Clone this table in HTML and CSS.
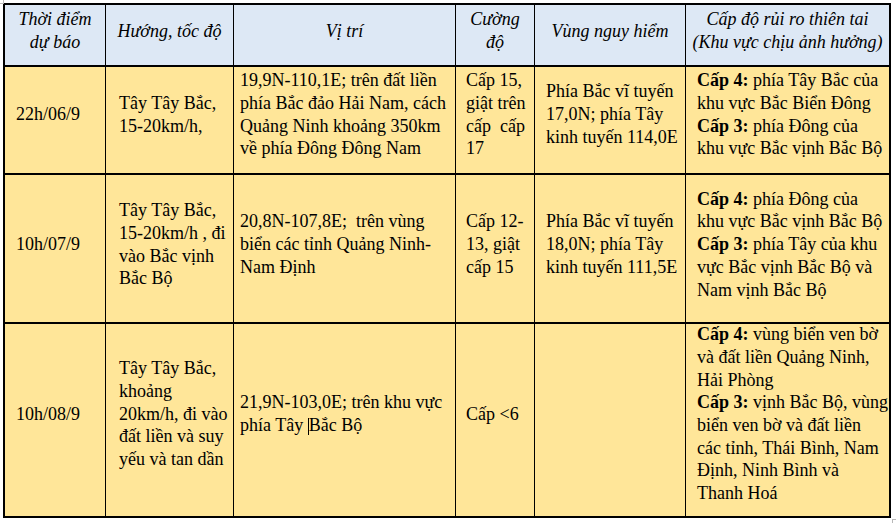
FILE: index.html
```html
<!DOCTYPE html>
<html lang="vi">
<head>
<meta charset="utf-8">
<title>Dự báo bão</title>
<link rel="stylesheet" href="styles.css">
</head>
<body>
<div class="sheet">
  <div class="cell head"><div class="txt">Thời điểm<br>dự báo</div></div>
  <div class="cell head"><div class="txt">Hướng, tốc độ</div></div>
  <div class="cell head"><div class="txt">Vị trí</div></div>
  <div class="cell head"><div class="txt">Cường<br>độ</div></div>
  <div class="cell head"><div class="txt">Vùng nguy hiểm</div></div>
  <div class="cell head"><div class="txt">Cấp độ rủi ro thiên tai<br>(Khu vực chịu ảnh hưởng)</div></div>

  <div class="cell c1 r1"><div class="txt">22h/06/9</div></div>
  <div class="cell c2 r1"><div class="txt">Tây Tây Bắc,<br>15-20km/h,</div></div>
  <div class="cell c3 r1"><div class="txt">19,9N-110,1E; trên đất liền<br>phía Bắc đảo Hải Nam, cách<br>Quảng Ninh khoảng 350km<br>về phía Đông Đông Nam</div></div>
  <div class="cell c4 r1"><div class="txt">Cấp 15,<br>giật trên<br>cấp&nbsp; cấp<br>17</div></div>
  <div class="cell c5 r1"><div class="txt">Phía Bắc vĩ tuyến<br>17,0N; phía Tây<br>kinh tuyến 114,0E</div></div>
  <div class="cell c6 r1"><div class="txt"><b>Cấp 4:</b> phía Tây Bắc của<br>khu vực Bắc Biển Đông<br><b>Cấp 3:</b> phía Đông của<br>khu vực Bắc vịnh Bắc Bộ</div></div>

  <div class="cell c1 r2"><div class="txt">10h/07/9</div></div>
  <div class="cell c2 r2"><div class="txt">Tây Tây Bắc,<br>15-20km/h , đi<br>vào Bắc vịnh<br>Bắc Bộ</div></div>
  <div class="cell c3 r2"><div class="txt">20,8N-107,8E;&nbsp; trên vùng<br>biển các tỉnh Quảng Ninh-<br>Nam Định</div></div>
  <div class="cell c4 r2"><div class="txt">Cấp 12-<br>13, giật<br>cấp 15</div></div>
  <div class="cell c5 r2"><div class="txt">Phía Bắc vĩ tuyến<br>18,0N; phía Tây<br>kinh tuyến 111,5E</div></div>
  <div class="cell c6 r2"><div class="txt"><b>Cấp 4:</b> phía Đông của<br>khu vực Bắc vịnh Bắc Bộ<br><b>Cấp 3:</b> phía Tây của khu<br>vực Bắc vịnh Bắc Bộ và<br>Nam vịnh Bắc Bộ</div></div>

  <div class="cell c1 r3"><div class="txt">10h/08/9</div></div>
  <div class="cell c2 r3"><div class="txt">Tây Tây Bắc,<br>khoảng<br>20km/h, đi vào<br>đất liền và suy<br>yếu và tan dần</div></div>
  <div class="cell c3 r3"><div class="txt">21,9N-103,0E; trên khu vực<br>phía Tây <span class="caret"></span>Bắc Bộ</div></div>
  <div class="cell c4 r3"><div class="txt">Cấp &lt;6</div></div>
  <div class="cell c5 r3"><div class="txt"></div></div>
  <div class="cell c6 r3"><div class="txt"><b>Cấp 4:</b> vùng biển ven bờ<br>và đất liền Quảng Ninh,<br>Hải Phòng<br><b>Cấp 3:</b> vịnh Bắc Bộ, vùng<br>biển ven bờ và đất liền<br>các tỉnh, Thái Bình, Nam<br>Định, Ninh Bình và<br>Thanh Hoá</div></div>
</div>
<div class="mark mark-tl"></div>
<div class="mark mark-br"></div>
</body>
</html>
```

FILE: styles.css
```css
html, body {
  margin: 0;
  padding: 0;
  background: #ffffff;
}

body {
  font-family: "Liberation Serif", "Times New Roman", serif;
  font-size: 18px;
  line-height: 22.7px;
  color: #000000;
  position: relative;
  min-height: 523px;
}

.sheet {
  display: grid;
  grid-template-columns: 100px 127px 221px 78px 150px 203px;
  grid-template-rows: 60px 106px 147px 192px;
  gap: 2px 1px;
  padding: 2px;
  background: #000000;
  width: max-content;
  margin: 3px 0 0 3px;
}

.cell {
  display: flex;
  flex-direction: column;
  justify-content: center;
  background: #ffe699;
  padding: 0 6px 11px 10px;
  white-space: nowrap;
  overflow: visible;
}

.txt {
  display: block;
}

.head {
  background: #dde8f5;
  font-style: italic;
  text-align: center;
  align-items: center;
  padding: 0 2px 8px 2px;
}

.c1 { padding-left: 11px; }
.c2 { padding-left: 13px; }
.c3 { padding-left: 6px; }
.c4 { padding-left: 10px; }
.c5 { padding-left: 11px; }
.c6 { padding-left: 11px; }

.r2 { padding-bottom: 8px; }
.r3 { padding-bottom: 12px; }

b { font-weight: bold; }

.caret {
  display: inline-block;
  width: 0;
  height: 17px;
  border-left: 1px solid #000000;
  vertical-align: -4px;
}

/* crop corner marks from the original capture */
.mark {
  position: absolute;
  width: 3px;
  height: 3px;
  border-color: #b8b8b8;
  border-style: solid;
  border-width: 0;
}

.mark-tl {
  left: 0;
  top: 0;
  border-right-width: 1px;
  border-bottom-width: 1px;
}

.mark-br {
  left: 892px;
  top: 519px;
  border-left-width: 1px;
  border-top-width: 1px;
}
```
